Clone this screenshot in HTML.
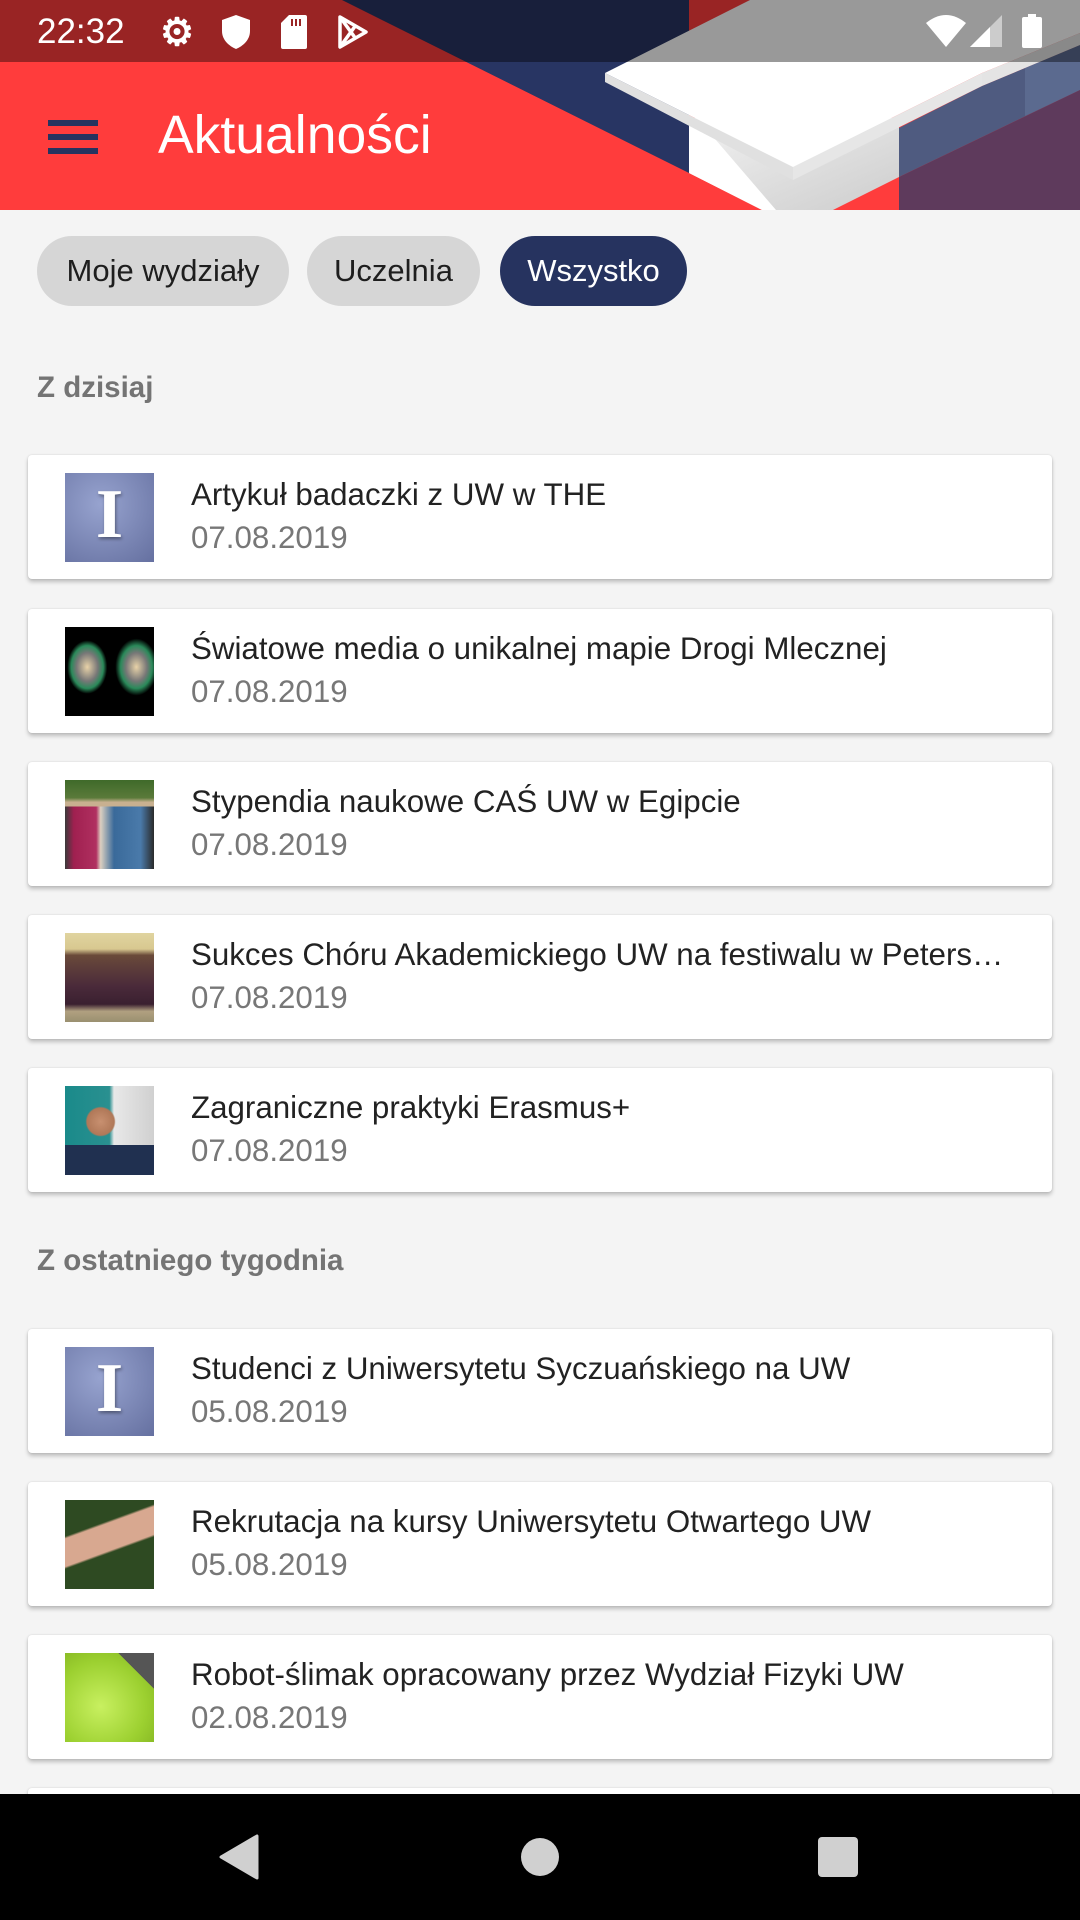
<!DOCTYPE html>
<html><head><meta charset="utf-8"><style>
*{margin:0;padding:0;box-sizing:border-box}
body{width:1080px;height:1920px;background:#f4f4f4;font-family:"Liberation Sans",sans-serif;position:relative;overflow:hidden}
.hdr{position:absolute;left:0;top:0;width:1080px;height:210px}
.title{position:absolute;left:158px;top:106px;color:#fff;font-size:53.5px;line-height:60px}
.ham{position:absolute;left:48px;width:50px;height:6px;background:#26335f}
.sb{position:absolute;top:12px;color:#fff;font-size:36px;font-weight:bold}
.chip{position:absolute;top:236px;height:70px;border-radius:35px;background:#d6d6d6;color:#1e1e1e;font-size:31px;line-height:70px;text-align:center}
.sec{position:absolute;left:37px;color:#747474;font-size:29.5px;font-weight:bold}
.card{position:absolute;left:28px;width:1024px;height:124px;background:#fff;border-radius:4px;box-shadow:0 3px 4px rgba(0,0,0,.22),0 0 2px rgba(0,0,0,.12)}
.th{position:absolute;left:37px;top:18px;width:89px;height:89px}
.t1{position:absolute;left:163px;top:22px;width:816px;font-size:31.3px;color:#222;white-space:nowrap;overflow:hidden;text-overflow:ellipsis}
.t2{position:absolute;left:163px;top:65px;font-size:31.3px;color:#777}
.I{background:radial-gradient(circle at 40% 35%,#97a3cf,#6570a0)}
.I::after{content:"I";position:absolute;left:0;right:0;top:2px;text-align:center;font:bold 70px "Liberation Serif",serif;color:#fff;text-shadow:1px 2px 3px rgba(0,0,0,.4)}
.nav{position:absolute;left:0;top:1794px;width:1080px;height:126px;background:#000}
</style></head><body>
<svg class="hdr" viewBox="0 0 1080 210">
<defs><linearGradient id="g" x1="0" y1="0" x2="1" y2="1"><stop offset="0" stop-color="#f2f2f2"/><stop offset="1" stop-color="#cdcdcd"/></linearGradient></defs>
<rect width="1080" height="210" fill="#ff3c3c"/>
<polygon points="342,0 689,0 689,173" fill="#283563"/>
<polygon points="899,128 982,86 1080,45 1080,90 899,177" fill="#4f5b80"/>
<polygon points="1025,68 1080,45 1080,90 1025,116" fill="#5b6a8f"/>
<polygon points="899,177 1080,90 1080,210 899,210" fill="#5e3a5c"/>
<polygon points="689,118 899,118 899,177 833,210 762,210 689,173" fill="url(#g)"/>
<polygon points="689,125 703,125 776,210 762,210 689,173" fill="#fff"/>
<polygon points="982,73 1080,33 1080,45 982,86" fill="#e4e4e4"/>
<polygon points="605,73 605,82 793,180 793,167" fill="#e0e0e0"/>
<polygon points="793,167 793,180 982,86 982,73" fill="#e6e6e6"/>
<polygon points="605,73 750,0 1080,0 1080,33 982,73 793,167" fill="#fff"/>
<rect width="1080" height="62" fill="#000" opacity="0.4"/>
</svg>
<div class="sb" style="left:37px;font-weight:normal;font-size:35px">22:32</div>
<div class="sb" style="left:160px;top:10px;font-size:38px">⚙</div>
<svg style="position:absolute;left:222px;top:15px" width="28" height="34" viewBox="0 0 28 34"><path d="M14 0L28 5V16C28 25 21 31 14 34C7 31 0 25 0 16V5Z" fill="#fff"/></svg>
<svg style="position:absolute;left:281px;top:15px" width="26" height="34" viewBox="0 0 26 34"><path d="M8 0H24Q26 0 26 2V32Q26 34 24 34H2Q0 34 0 32V8Z" fill="#fff"/><rect x="10" y="4" width="2" height="7" fill="#992424"/><rect x="14" y="4" width="2" height="7" fill="#992424"/><rect x="18" y="4" width="2" height="7" fill="#992424"/></svg>
<svg style="position:absolute;left:338px;top:15px" width="30" height="34" viewBox="0 0 30 34"><path d="M2 2L28 17L2 32Z M2 2L18 24 M2 32L18 10" fill="none" stroke="#fff" stroke-width="3.5" stroke-linejoin="round"/></svg>
<svg style="position:absolute;left:926px;top:15px" width="40" height="32" viewBox="0 0 40 32"><path d="M0 8Q20-8 40 8L20 32Z" fill="#fff"/></svg>
<svg style="position:absolute;left:970px;top:15px" width="32" height="32" viewBox="0 0 32 32"><path d="M32 0V32H0Z" fill="#fff" opacity=".5"/><path d="M20 12V32H0L20 12Z" fill="#fff"/></svg>
<svg style="position:absolute;left:1022px;top:14px" width="20" height="34" viewBox="0 0 20 34"><rect x="6" y="0" width="8" height="4" fill="#fff"/><rect x="0" y="3" width="20" height="31" rx="2" fill="#fff"/></svg>
<div class="ham" style="top:120px"></div><div class="ham" style="top:134px"></div><div class="ham" style="top:148px"></div>
<div class="title">Aktualności</div>
<div class="chip" style="left:37px;width:252px">Moje wydziały</div>
<div class="chip" style="left:307px;width:173px">Uczelnia</div>
<div class="chip" style="left:500px;width:187px;background:#26335f;color:#fff">Wszystko</div>
<div class="sec" style="top:371px">Z dzisiaj</div>
<div class="card" style="top:455px"><div class="th I"></div><div class="t1">Artykuł badaczki z UW w THE</div><div class="t2">07.08.2019</div></div>
<div class="card" style="top:609px"><div class="th" style="background:radial-gradient(ellipse 30% 40% at 25% 45%,#e8d2a8,#777 40%,#2a8a5a 60%,#000 75%),#000"><div style="position:absolute;left:45px;top:0;width:44px;height:89px;background:radial-gradient(ellipse 60% 40% at 60% 45%,#e8d2a8,#777 40%,#2a8a5a 60%,#000 80%)"></div></div><div class="t1">Światowe media o unikalnej mapie Drogi Mlecznej</div><div class="t2">07.08.2019</div></div>
<div class="card" style="top:762px"><div class="th" style="background:linear-gradient(#3f6a2a 0,#5a7a3a 20%,#c8b090 25%,#c8b090 30%,transparent 30%),linear-gradient(90deg,#3a3a3a 0,#a02050 10%,#b03060 35%,#dcd0c0 40%,#3a6a9a 55%,#4a7aaa 85%,#2a2a2a 100%)"></div><div class="t1">Stypendia naukowe CAŚ UW w Egipcie</div><div class="t2">07.08.2019</div></div>
<div class="card" style="top:915px"><div class="th" style="background:linear-gradient(#e0d4a0 0,#d8c890 18%,#6a4a3a 25%,#4a2a3a 60%,#3a2030 80%,#b0a080 88%,#9a9070 100%)"></div><div class="t1">Sukces Chóru Akademickiego UW na festiwalu w Petersburgu</div><div class="t2">07.08.2019</div></div>
<div class="card" style="top:1068px"><div class="th" style="background:radial-gradient(circle at 40% 40%,#c89070 0,#b07858 18%,transparent 20%),linear-gradient(90deg,#1a8a8a 0,#2a9090 50%,#e8e8e8 55%,#d0d0d0 100%)"><div style="position:absolute;left:0;bottom:0;width:89px;height:30px;background:#203050"></div></div><div class="t1">Zagraniczne praktyki Erasmus+</div><div class="t2">07.08.2019</div></div>
<div class="sec" style="top:1244px">Z ostatniego tygodnia</div>
<div class="card" style="top:1329px"><div class="th I"></div><div class="t1">Studenci z Uniwersytetu Syczuańskiego na UW</div><div class="t2">05.08.2019</div></div>
<div class="card" style="top:1482px"><div class="th" style="background:linear-gradient(160deg,transparent 30%,#d8a890 32%,#d8a890 55%,transparent 57%),#2e4a22"></div><div class="t1">Rekrutacja na kursy Uniwersytetu Otwartego UW</div><div class="t2">05.08.2019</div></div>
<div class="card" style="top:1635px"><div class="th" style="background:linear-gradient(45deg,transparent 80%,#555 80%),radial-gradient(circle at 40% 60%,#c8f060,#9cd030 60%,#80b020)"></div><div class="t1">Robot-ślimak opracowany przez Wydział Fizyki UW</div><div class="t2">02.08.2019</div></div>
<div class="card" style="top:1788px"></div>
<div class="nav">
<svg style="position:absolute;left:219px;top:40px" width="40" height="46" viewBox="0 0 40 46"><path d="M38 2V44L2 23Z" fill="#d0d0d0" stroke="#d0d0d0" stroke-width="3" stroke-linejoin="round"/></svg>
<div style="position:absolute;left:521px;top:44px;width:38px;height:38px;border-radius:50%;background:#d0d0d0"></div>
<div style="position:absolute;left:818px;top:43px;width:40px;height:40px;border-radius:4px;background:#d0d0d0"></div>
</div>
</body></html>
